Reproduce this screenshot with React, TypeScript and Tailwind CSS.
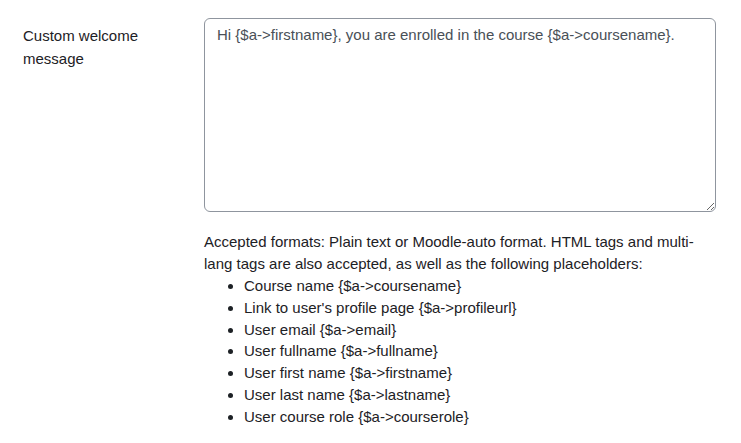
const PLACEHOLDERS = [
  "Course name {$a->coursename}",
  "Link to user's profile page {$a->profileurl}",
  "User email {$a->email}",
  "User fullname {$a->fullname}",
  "User first name {$a->firstname}",
  "User last name {$a->lastname}",
  "User course role {$a->courserole}",
];

export default function App() {
  return (
    <div
      className="min-h-screen bg-white text-[15px] leading-[22px] text-[#1d2125]"
      style={{ fontFamily: '"Liberation Sans", Arial, sans-serif' }}
    >
      <div className="flex pt-[18px]">
        {/* label column */}
        <div className="w-[204px] shrink-0 pl-[23px] pt-[6px] leading-[23px]">
          Custom welcome
          <br />
          message
        </div>

        {/* field column */}
        <div className="w-[511px]">
          <textarea
            className="block h-[194px] w-[512px] rounded-[6px] border border-[#8f959e] px-3 py-[5px] text-[15px] leading-[22px] text-[#495057] outline-none"
            defaultValue="Hi {$a->firstname}, you are enrolled in the course {$a->coursename}."
          />
          <div className="mt-[19px] w-[500px] pr-2">
            Accepted formats: Plain text or Moodle-auto format. HTML tags and multi-lang tags are
            also accepted, as well as the following placeholders:
            <ul className="list-disc pl-10 leading-[21.8px]">
              {PLACEHOLDERS.map((p) => (
                <li key={p}>{p}</li>
              ))}
            </ul>
          </div>
        </div>
      </div>
    </div>
  );
}
